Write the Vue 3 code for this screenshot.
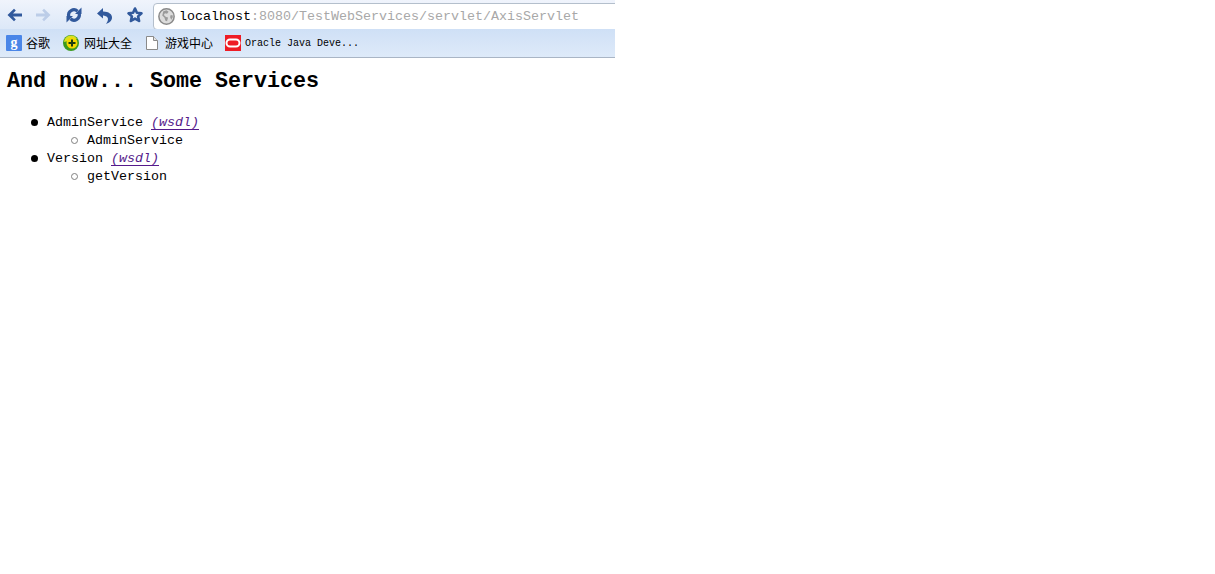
<template>
  <div class="browser">
    <div class="toolbar">
      <button class="nav-btn" v-for="icon in navIcons" :key="icon.name" :class="icon.name">
        <svg width="18" height="18" viewBox="0 0 18 18">
          <path v-for="p in icon.paths" :key="p.d" :d="p.d" :fill="p.fill || 'none'" :stroke="p.stroke" :stroke-width="p.width" stroke-linejoin="round" />
        </svg>
      </button>
      <div class="omnibox">
        <svg class="globe" width="17" height="17" viewBox="0 0 16 16">
          <circle cx="8" cy="8" r="7.200" fill="#dcdcdc" stroke="#8a8a8a" stroke-width="1.400" />
          <path d="M5 3l3-1 2 1.500-1.500 2-2-.5-1 1.500 2 2 2 .5-1 3.500-1.500-.5-1-3-2-2 .5-2z" fill="#9a9a9a" />
          <path d="M11.500 7l2-.5.500 2-1.500 2.500-1-2z" fill="#9a9a9a" />
        </svg>
        <span class="url"><span class="host">localhost</span>:8080/TestWebServices/servlet/AxisServlet</span>
      </div>
    </div>
    <div class="bookmarks">
      <div class="bookmark first">
        <svg width="16" height="16" viewBox="0 0 16 16">
          <rect width="16" height="16" rx="1" fill="#4a86e8" />
          <text x="8" y="12" text-anchor="middle" class="g-mark">g</text>
        </svg>
        <span>谷歌</span>
      </div>
      <div class="bookmark wide">
        <svg width="16" height="16" viewBox="0 0 16 16">
          <circle cx="8" cy="8" r="8" fill="#3c9a1e" />
          <path d="M1 7a7 7 0 0 1 13-3z" fill="#d9e021" />
          <circle cx="9" cy="8" r="5.500" fill="#f5d800" />
          <path d="M8 4.500h2v2.500h2.500v2H10v2.500H8V9H5.500V7H8z" fill="#1d3d10" />
        </svg>
        <span>网址大全</span>
      </div>
      <div class="bookmark wide">
        <svg width="16" height="16" viewBox="0 0 16 16">
          <path d="M2.500 1.500h7l4 4v9h-11z" fill="#fff" stroke="#8a8a8a" />
          <path d="M9.500 1.500v4h4" fill="#e4e4e4" stroke="#8a8a8a" />
        </svg>
        <span>游戏中心</span>
      </div>
      <div class="bookmark oracle">
        <svg width="16" height="16" viewBox="0 0 16 16">
          <rect width="16" height="16" fill="#ee1c25" />
          <rect x="1.500" y="4.500" width="13" height="7" rx="3.500" fill="none" stroke="#fff" stroke-width="2" />
        </svg>
        <span>Oracle Java Deve...</span>
      </div>
    </div>
    <div class="page">
      <h1>And now... Some Services</h1>
      <ul>
        <li v-for="service in services" :key="service.name">
          {{ service.name }}
          <a href="#">(wsdl)</a>
          <ul>
            <li>{{ service.method }}</li>
          </ul>
        </li>
      </ul>
    </div>
  </div>
</template>

<script setup>
const blue = '#31599c'

const navIcons = [
  { name: 'back', paths: [{ fill: blue, d: 'M1.500 9L8 2.800l1.800 1.800L7 7.500h9v3H7l2.800 2.900L8 15.200z' }] },
  { name: 'forward', paths: [{ fill: '#bccde8', d: 'M16.500 9L10 2.800 8.200 4.600 11 7.500H2v3h9l-2.800 2.900L10 15.200z' }] },
  {
    name: 'reload',
    paths: [
      { stroke: blue, width: 3.2, d: 'M3.800 10.500A5.300 5.300 0 0 1 12.500 5.200' },
      { stroke: blue, width: 3.2, d: 'M14.200 7.500A5.300 5.300 0 0 1 5.500 12.800' },
      { fill: blue, d: 'M10 8h6.500V1.500z' },
      { fill: blue, d: 'M8 10H1.500v6.500z' }
    ]
  },
  {
    name: 'undo',
    paths: [
      { fill: blue, d: 'M7 2L1 7.500 7 12.500z' },
      { fill: blue, d: 'M6 5.500C12 5 16.500 8 16 12c-.2 3-3 5-6 6 2-3 2.500-5 1.500-6.500C10.500 10 8 9.500 6 9.500z' }
    ]
  },
  { name: 'star', paths: [{ stroke: blue, width: 2.6, d: 'M9 2.500l1.900 4.300 4.600.5-3.400 3.100 1 4.600L9 12.600l-4.100 2.400 1-4.600-3.400-3.100 4.600-.5z' }] }
]

const services = [
  { name: 'AdminService', method: 'AdminService' },
  { name: 'Version', method: 'getVersion' }
]
</script>

<style>
html, body {
  background: #fff;
}
</style>

<style scoped>
.browser {
  width: 100%;
  min-height: 574px;
  overflow: hidden;
  background: #fff;
}

.toolbar {
  width: 615px;
  height: 29px;
  display: flex;
  align-items: center;
  overflow: hidden;
  background: linear-gradient(#f0f4fc, #dce8f8);
  padding-left: 1px;
  box-sizing: border-box;
}

.nav-btn {
  width: 28px;
  height: 29px;
  flex-shrink: 0;
  padding: 0;
  border: none;
  background: none;
  display: flex;
  align-items: center;
  justify-content: center;
}

.nav-btn.reload,
.nav-btn.undo {
  margin-left: 3px;
}

.nav-btn.star {
  margin-left: 2px;
}

.omnibox {
  margin-left: 4px;
  width: 520px;
  height: 27px;
  flex-shrink: 0;
  display: flex;
  align-items: center;
  gap: 4px;
  padding-left: 4px;
  box-sizing: border-box;
  background: #fff;
  border: 1px solid #b4bfcc;
  border-radius: 4px;
  margin-top: 3px;
}

.url {
  font: 13.33px "Liberation Mono", monospace;
  color: #a8a8a8;
  white-space: nowrap;
}

.host {
  color: #000;
}

.bookmarks {
  width: 615px;
  height: 29px;
  display: flex;
  align-items: center;
  gap: 12px;
  padding-left: 6px;
  box-sizing: border-box;
  background: linear-gradient(#cfe0f6, #deeaf9);
  border-bottom: 1px solid #a9b5c5;
}

.bookmark {
  display: flex;
  align-items: center;
  gap: 4px;
  font: 12px "Noto Sans CJK SC", sans-serif;
  color: #000;
  white-space: nowrap;
}

.bookmark span {
  margin-bottom: 2px;
}

.bookmark.first {
  margin-right: 1px;
}

.bookmark.wide {
  gap: 5px;
}

.bookmark.oracle {
  font: 10px "Liberation Mono", monospace;
}

.bookmark.oracle span {
  margin-bottom: 0;
}

.g-mark {
  font: bold 14px "Liberation Serif", serif;
  fill: #fff;
}

.page {
  padding: 0 7px;
  font: 13.33px/18px "Liberation Mono", monospace;
  color: #000;
}

h1 {
  font: bold 21.67px/25px "Liberation Mono", monospace;
  margin: 0;
  padding: 11px 0 20px;
}

ul {
  margin: 0;
  padding-left: 40px;
  list-style: none;
}

li {
  position: relative;
}

li::before {
  content: "";
  position: absolute;
  left: -16px;
  top: 5px;
  width: 7px;
  height: 7px;
  box-sizing: border-box;
  border-radius: 50%;
  background: #000;
}

ul ul li::before {
  background: #fff;
  border: 1.5px solid #808080;
}

a {
  color: #551a8b;
  font-style: italic;
  text-decoration: underline;
  text-decoration-skip-ink: none;
  text-underline-offset: 3px;
}
</style>
